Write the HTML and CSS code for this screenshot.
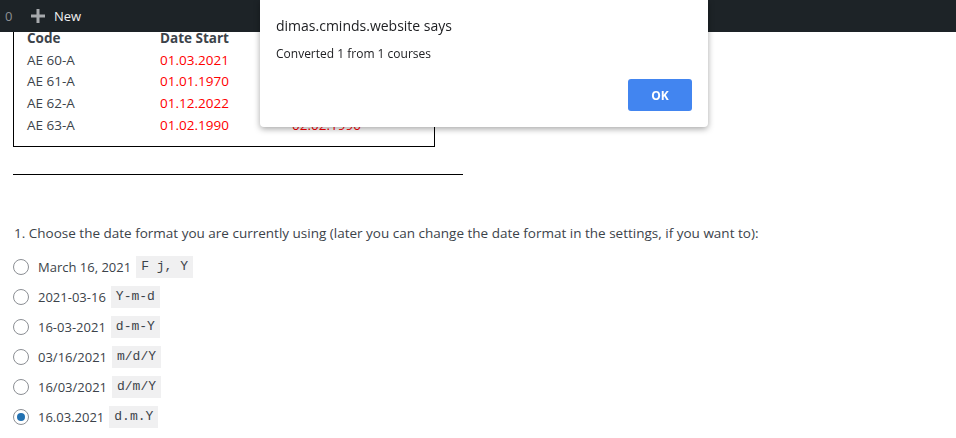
FILE: index.html
```html
<!DOCTYPE html>
<html>
<head>
<meta charset="utf-8">
<link rel="stylesheet" href="styles.css">
</head>
<body>
<div class="adminbar">
  <span class="count">0</span>
  <span class="new">
    <svg class="plus" width="14" height="14" viewBox="0 0 14 14"><path d="M5.5 0h3v5.5H14v3H8.5V14h-3V8.5H0v-3h5.5z" fill="#a7aaad"/></svg>
    <span class="new-label">New</span>
  </span>
</div>

<main class="page">
  <div class="tablebox">
    <div class="grid">
      <div class="th">Code</div><div class="th">Date Start</div><div class="th">Date End</div>
      <div class="td">AE 60-A</div><div class="td red">01.03.2021</div><div class="td red">02.03.2021</div>
      <div class="td">AE 61-A</div><div class="td red">01.01.1970</div><div class="td red">02.01.1970</div>
      <div class="td">AE 62-A</div><div class="td red">01.12.2022</div><div class="td red">02.12.2022</div>
      <div class="td">AE 63-A</div><div class="td red">01.02.1990</div><div class="td red">02.02.1990</div>
    </div>
  </div>
  <hr class="rule">
  <p class="question">1. Choose the date format you are currently using (later you can change the date format in the settings, if you want to):</p>
  <ul class="options">
    <li class="opt"><span class="radio"></span><span class="label">March 16, 2021</span><code class="chip">F j, Y</code></li>
    <li class="opt"><span class="radio"></span><span class="label">2021-03-16</span><code class="chip">Y-m-d</code></li>
    <li class="opt"><span class="radio"></span><span class="label">16-03-2021</span><code class="chip">d-m-Y</code></li>
    <li class="opt"><span class="radio"></span><span class="label">03/16/2021</span><code class="chip">m/d/Y</code></li>
    <li class="opt"><span class="radio"></span><span class="label">16/03/2021</span><code class="chip">d/m/Y</code></li>
    <li class="opt"><span class="radio checked"></span><span class="label">16.03.2021</span><code class="chip">d.m.Y</code></li>
  </ul>
</main>

<div class="dialog">
  <div class="dlg-title">dimas.cminds.website says</div>
  <div class="dlg-msg">Converted 1 from 1 courses</div>
  <div class="dlg-actions"><button class="ok">OK</button></div>
</div>
</body>
</html>
```

FILE: styles.css
```css
html, body {
  margin: 0;
  padding: 0;
  background: #fff;
}
body {
  font-family: "Open Sans", "Noto Sans", sans-serif;
  font-size: 13px;
  color: #3c434a;
  position: relative;
  height: 438px;
  overflow: hidden;
}
.adminbar {
  position: fixed;
  top: 0;
  left: 0;
  right: 0;
  height: 32px;
  background: #1d2327;
  display: flex;
  align-items: center;
  z-index: 10;
}
.count {
  color: #8c8f94;
  font-size: 13px;
  padding-left: 5px;
  width: 9px;
}
.new {
  display: flex;
  align-items: center;
  margin-left: 17px;
  gap: 9px;
}
.plus { display: block; }
.new-label {
  color: #f0f0f1;
  font-size: 13px;
}
.page {
  padding: 27px 13px 0;
}
.tablebox {
  width: 420px;
  border: 1px solid #000;
  padding: 0 0 10px;
}
.grid {
  display: grid;
  grid-template-columns: 133px 132px auto;
  grid-auto-rows: 21.7px;
  padding-left: 13px;
  line-height: 21.7px;
  font-size: 13.5px;
}
.th { font-weight: 700; }
.red { color: #ff0000; }
.rule {
  width: 450px;
  margin: 27px 0 0;
  border: 0;
  border-top: 1px solid #000;
  height: 0;
}
.question {
  margin: 48px 0 0 1px;
  line-height: 20px;
  font-size: 13.5px;
}
.options {
  list-style: none;
  margin: 9px 0 0;
  padding: 0;
}
.opt {
  display: flex;
  align-items: center;
  height: 30px;
}
.radio {
  width: 14px;
  height: 14px;
  border: 1px solid #8c8f94;
  border-radius: 50%;
  box-sizing: content-box;
  margin-right: 9px;
  position: relative;
  flex: none;
}
.radio.checked::after {
  content: "";
  position: absolute;
  left: 3px;
  top: 3px;
  width: 8px;
  height: 8px;
  border-radius: 50%;
  background: #2271b1;
}
.label {
  margin-right: 5px;
  color: #3c434a;
}
.chip {
  font-family: "Liberation Mono", "DejaVu Sans Mono", monospace;
  font-size: 13px;
  background: #f0f0f1;
  color: #3c434a;
  padding: 0 5px;
  line-height: 22px;
}
.dialog {
  position: absolute;
  top: 0;
  left: 260px;
  width: 448px;
  height: 127px;
  box-sizing: border-box;
  background: #fff;
  border-radius: 0 0 4px 4px;
  box-shadow: 0 2px 6px rgba(0,0,0,0.35);
  z-index: 20;
  padding: 15px 16px 16px;
  display: flex;
  flex-direction: column;
  font-family: "Open Sans", "Noto Sans", sans-serif;
  color: #202124;
}
.dlg-title {
  font-size: 14px;
  line-height: 22px;
}
.dlg-msg {
  font-size: 12px;
  margin-top: 8px;
  line-height: 18px;
}
.dlg-actions {
  margin-top: auto;
  display: flex;
  justify-content: flex-end;
}
.ok {
  width: 64px;
  height: 32px;
  border: 0;
  border-radius: 3px;
  background: #4285f0;
  color: #fff;
  font-family: "Open Sans", "Noto Sans", sans-serif;
  font-weight: 700;
  font-size: 12px;
  padding: 0;
}
```
